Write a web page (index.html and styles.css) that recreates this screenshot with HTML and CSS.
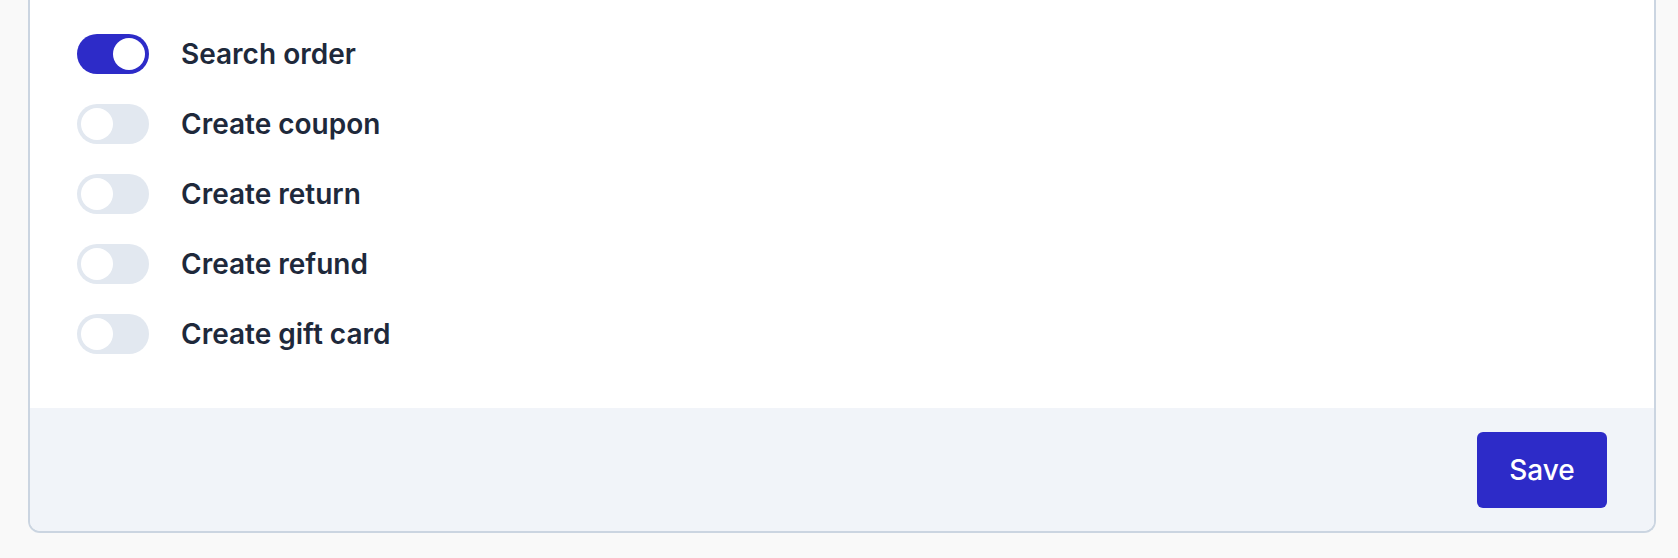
FILE: index.html
```html
<!DOCTYPE html>
<html lang="en">
<head>
  <meta charset="UTF-8" />
  <meta name="viewport" content="width=device-width, initial-scale=1.0"/>
  <title>Permissions</title>
  <link rel="stylesheet" href="styles.css">
</head>
<body>
  <main class="page">
    <section class="card">
      <ul class="perm-list">
        <li class="perm">
          <span class="toggle on"><span class="knob"></span></span>
          <span class="perm-label">Search order</span>
        </li>
        <li class="perm">
          <span class="toggle"><span class="knob"></span></span>
          <span class="perm-label">Create coupon</span>
        </li>
        <li class="perm">
          <span class="toggle"><span class="knob"></span></span>
          <span class="perm-label">Create return</span>
        </li>
        <li class="perm">
          <span class="toggle"><span class="knob"></span></span>
          <span class="perm-label">Create refund</span>
        </li>
        <li class="perm">
          <span class="toggle"><span class="knob"></span></span>
          <span class="perm-label">Create gift card</span>
        </li>
      </ul>
      <div class="card-footer">
        <button class="btn-save">Save</button>
      </div>
    </section>
  </main>
</body>
</html>
```

FILE: styles.css
```css
/* Base */
body {
  font-family: Inter, 'Noto Sans', sans-serif;
  background-color: #f9f9f9;
  color: #1e293b;
  margin: 0;
  padding: 0;
}

.page {
  padding: 0 22px 26px 28px;
}

.card {
  background-color: #ffffff;
  border: 2px solid #cbd5e1;
  border-top: 0;
  border-radius: 0 0 12px 12px;
  overflow: hidden;
}

.perm-list {
  list-style: none;
  margin: 0;
  padding: 34px 47px 54px;
  display: flex;
  flex-direction: column;
  gap: 30px;
}

.perm {
  display: flex;
  align-items: center;
  gap: 32px;
}

.perm-label {
  font-size: 28px;
  font-weight: 600;
  color: #1e293b;
}

/* Toggle switch */
.toggle {
  width: 72px;
  height: 40px;
  box-sizing: border-box;
  padding: 4px;
  border-radius: 20px;
  background-color: #e2e8f0;
  display: flex;
  flex-shrink: 0;
}

.toggle .knob {
  width: 32px;
  height: 32px;
  border-radius: 50%;
  background-color: #ffffff;
}

.toggle.on {
  background-color: #2d2bc8;
  justify-content: flex-end;
}

/* Footer */
.card-footer {
  background-color: #f1f4f9;
  padding: 24px 47px 23px;
  display: flex;
  justify-content: flex-end;
}

.btn-save {
  font-family: inherit;
  font-size: 28px;
  font-weight: 500;
  color: #ffffff;
  background-color: #2d2bc8;
  border: 0;
  border-radius: 6px;
  width: 130px;
  height: 76px;
  cursor: pointer;
}
```
